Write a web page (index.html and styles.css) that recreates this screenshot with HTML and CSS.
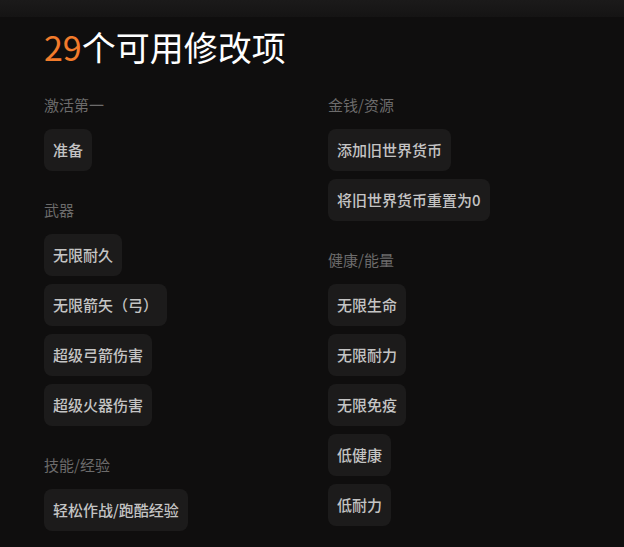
FILE: index.html
```html
<!DOCTYPE html>
<html lang="zh-CN">
<head>
<meta charset="utf-8">
<title>29个可用修改项</title>
<link rel="stylesheet" href="styles.css">
</head>
<body>
<div class="topbar"></div>
<main class="page">
  <h1 class="title"><span class="count">29</span>个可用修改项</h1>
  <div class="columns">
    <div class="col">
      <section class="group">
        <h2 class="group-title">激活第一</h2>
        <div class="chips">
          <span class="chip">准备</span>
        </div>
      </section>
      <section class="group">
        <h2 class="group-title">武器</h2>
        <div class="chips">
          <span class="chip">无限耐久</span>
          <span class="chip">无限箭矢（弓）</span>
          <span class="chip">超级弓箭伤害</span>
          <span class="chip">超级火器伤害</span>
        </div>
      </section>
      <section class="group">
        <h2 class="group-title">技能/经验</h2>
        <div class="chips">
          <span class="chip">轻松作战/跑酷经验</span>
        </div>
      </section>
    </div>
    <div class="col">
      <section class="group">
        <h2 class="group-title">金钱/资源</h2>
        <div class="chips">
          <span class="chip">添加旧世界货币</span>
          <span class="chip">将旧世界货币重置为0</span>
        </div>
      </section>
      <section class="group">
        <h2 class="group-title">健康/能量</h2>
        <div class="chips">
          <span class="chip">无限生命</span>
          <span class="chip">无限耐力</span>
          <span class="chip">无限免疫</span>
          <span class="chip">低健康</span>
          <span class="chip">低耐力</span>
        </div>
      </section>
    </div>
  </div>
</main>
</body>
</html>
```

FILE: styles.css
```css
html, body {
  margin: 0;
  padding: 0;
}
body {
  background: #0f0e0e;
  font-family: "Noto Sans CJK SC", "Noto Sans", sans-serif;
  color: #c9c9c9;
  overflow: hidden;
}
.topbar {
  height: 17px;
  background: linear-gradient(to bottom, #1b1a1a, #151414);
}
.page {
  padding: 0 0 0 44px;
}
.title {
  margin: 6px 0 0 0;
  font-size: 34px;
  font-weight: 400;
  line-height: 48px;
  color: #ffffff;
}
.count {
  color: #f27b2b;
}
.columns {
  display: grid;
  grid-template-columns: 284px 1fr;
  margin-top: 24px;
}
.group {
  margin-bottom: 29px;
}
.group-title {
  margin: 0 0 14px 0;
  font-size: 15px;
  font-weight: 400;
  line-height: 20px;
  color: #6c6b6b;
}
.chips {
  display: flex;
  flex-direction: column;
  align-items: flex-start;
  gap: 8px;
}
.chip {
  display: inline-block;
  height: 42px;
  box-sizing: border-box;
  padding: 10px 9px;
  font-size: 15px;
  font-weight: 500;
  line-height: 22px;
  background: #1c1b1b;
  border-radius: 8px;
  color: #c4c4c4;
}
```
